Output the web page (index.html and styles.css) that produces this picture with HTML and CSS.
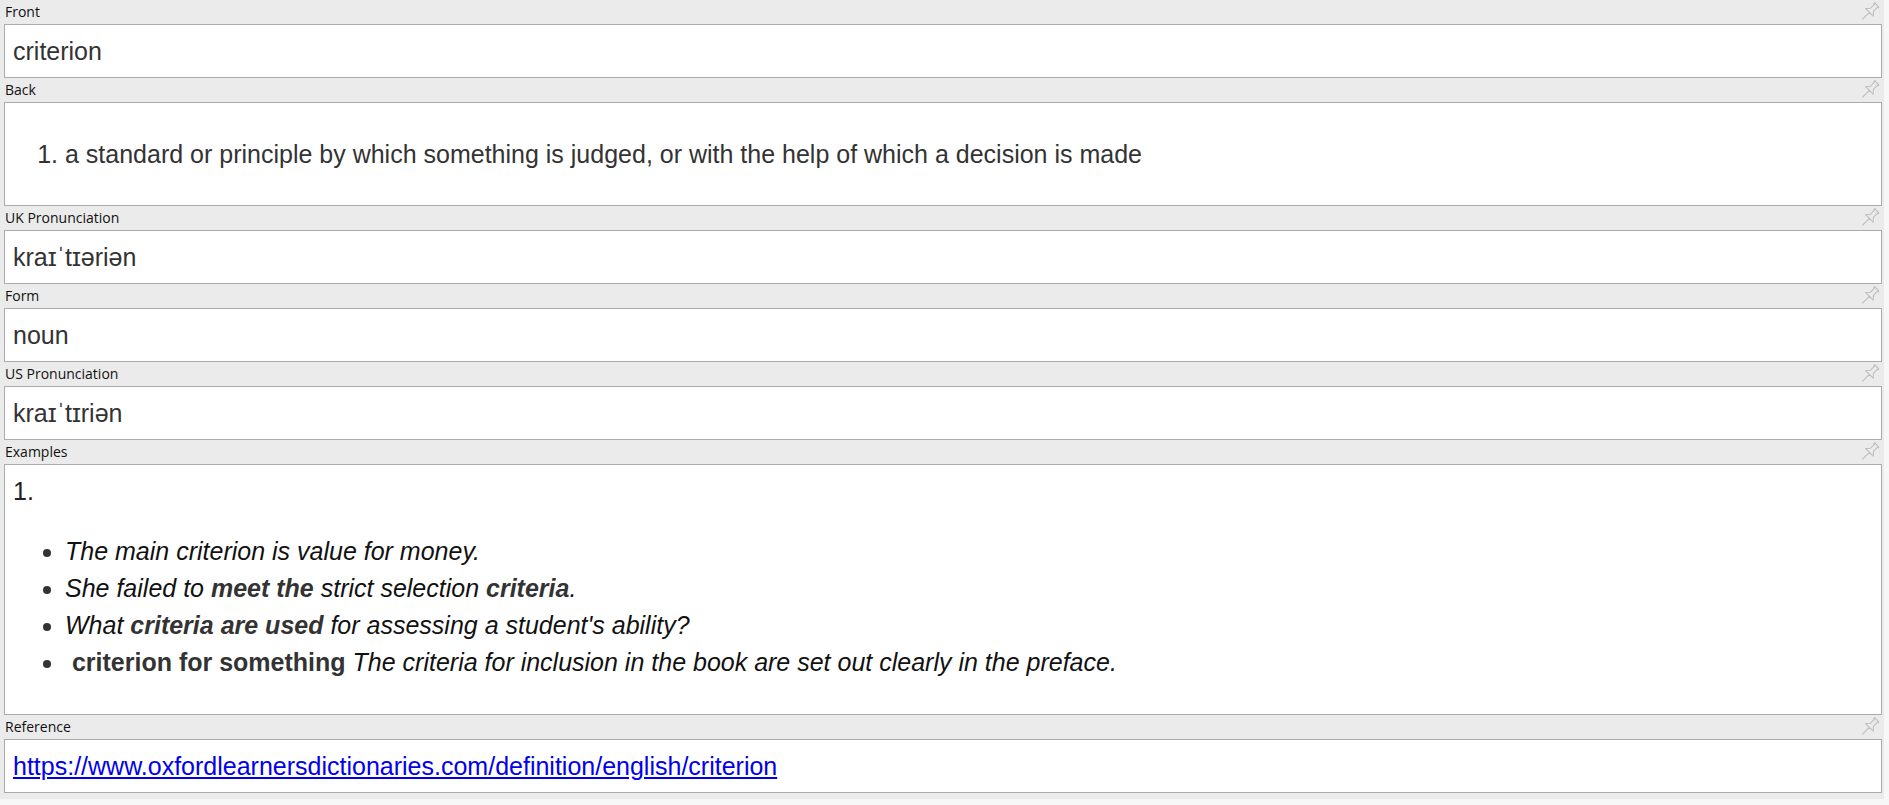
FILE: index.html
```html
<!DOCTYPE html>
<html>
<head>
<meta charset="utf-8">
<link rel="stylesheet" href="styles.css">
</head>
<body>
<div class="editor">
  <div class="field">
    <div class="label-row"><span class="label">Front</span><svg class="pin" viewBox="-8 -8 16 16"><g transform="translate(0.3 0.3) rotate(45)"><path d="M-2.5 -8.5 H2.5 V-7.5 H1.7 V-3 L4.3 0 H-4.3 L-1.7 -3 V-7.5 H-2.5 Z M0 0 V8"/></g></svg></div>
    <div class="box">criterion</div>
  </div>
  <div class="field">
    <div class="label-row"><span class="label">Back</span><svg class="pin" viewBox="-8 -8 16 16"><g transform="translate(0.3 0.3) rotate(45)"><path d="M-2.5 -8.5 H2.5 V-7.5 H1.7 V-3 L4.3 0 H-4.3 L-1.7 -3 V-7.5 H-2.5 Z M0 0 V8"/></g></svg></div>
    <div class="box"><ol class="def"><li>a standard or principle by which something is judged, or with the help of which a decision is made</li></ol></div>
  </div>
  <div class="field">
    <div class="label-row"><span class="label">UK Pronunciation</span><svg class="pin" viewBox="-8 -8 16 16"><g transform="translate(0.3 0.3) rotate(45)"><path d="M-2.5 -8.5 H2.5 V-7.5 H1.7 V-3 L4.3 0 H-4.3 L-1.7 -3 V-7.5 H-2.5 Z M0 0 V8"/></g></svg></div>
    <div class="box">kraɪˈtɪəriən</div>
  </div>
  <div class="field">
    <div class="label-row"><span class="label">Form</span><svg class="pin" viewBox="-8 -8 16 16"><g transform="translate(0.3 0.3) rotate(45)"><path d="M-2.5 -8.5 H2.5 V-7.5 H1.7 V-3 L4.3 0 H-4.3 L-1.7 -3 V-7.5 H-2.5 Z M0 0 V8"/></g></svg></div>
    <div class="box">noun</div>
  </div>
  <div class="field">
    <div class="label-row"><span class="label">US Pronunciation</span><svg class="pin" viewBox="-8 -8 16 16"><g transform="translate(0.3 0.3) rotate(45)"><path d="M-2.5 -8.5 H2.5 V-7.5 H1.7 V-3 L4.3 0 H-4.3 L-1.7 -3 V-7.5 H-2.5 Z M0 0 V8"/></g></svg></div>
    <div class="box">kraɪˈtɪriən</div>
  </div>
  <div class="field">
    <div class="label-row"><span class="label">Examples</span><svg class="pin" viewBox="-8 -8 16 16"><g transform="translate(0.3 0.3) rotate(45)"><path d="M-2.5 -8.5 H2.5 V-7.5 H1.7 V-3 L4.3 0 H-4.3 L-1.7 -3 V-7.5 H-2.5 Z M0 0 V8"/></g></svg></div>
    <div class="box examples">
      <div class="num">1.</div>
      <ul class="ex">
        <li><i>The main criterion is value for money.</i></li>
        <li><i>She failed to <b>meet the</b> strict selection <b>criteria</b>.</i></li>
        <li><i>What <b>criteria are used</b> for assessing a student's ability?</i></li>
        <li><b>&nbsp;criterion for something</b> <i>The criteria for inclusion in the book are set out clearly in the preface.</i></li>
      </ul>
    </div>
  </div>
  <div class="field">
    <div class="label-row"><span class="label">Reference</span><svg class="pin" viewBox="-8 -8 16 16"><g transform="translate(0.3 0.3) rotate(45)"><path d="M-2.5 -8.5 H2.5 V-7.5 H1.7 V-3 L4.3 0 H-4.3 L-1.7 -3 V-7.5 H-2.5 Z M0 0 V8"/></g></svg></div>
    <div class="box"><a class="link" href="#">https://www.oxfordlearnersdictionaries.com/definition/english/criterion</a></div>
  </div>
</div>
</body>
</html>
```
FILE: styles.css
```css
html, body {
  margin: 0;
  padding: 0;
  background: #f7f7f7;
}

.editor {
  width: 1878px;
  padding: 0 2px 6px 4px;
  background: #ebebeb;
  display: flex;
  flex-direction: column;
}

.label-row {
  height: 24px;
  display: flex;
  align-items: center;
  justify-content: space-between;
}

.label {
  font-family: "Open Sans", "Noto Sans", sans-serif;
  font-size: 14px;
  color: #111;
  padding-left: 1px;
  line-height: 24px;
}

.pin {
  width: 20px;
  height: 20px;
  margin-right: 3px;
  fill: none;
  stroke: #bdbdbd;
  stroke-width: 0.85;
  stroke-linejoin: round;
}

.box {
  background: #fff;
  border: 1px solid #ababab;
  padding: 12px 8px;
  font-family: "Liberation Sans", Arial, sans-serif;
  font-size: 25px;
  line-height: 28px;
  color: #333;
}

.def {
  margin: 25px 0;
  padding-left: 52px;
}

.num {
  color: #222;
}

.ex {
  margin: 28px 0 21px;
  padding-left: 52px;
  line-height: 37px;
}

.ex i {
  color: #111;
}

.ex b {
  color: #333;
}

.link {
  color: #0000ee;
  text-decoration: underline;
}
```
